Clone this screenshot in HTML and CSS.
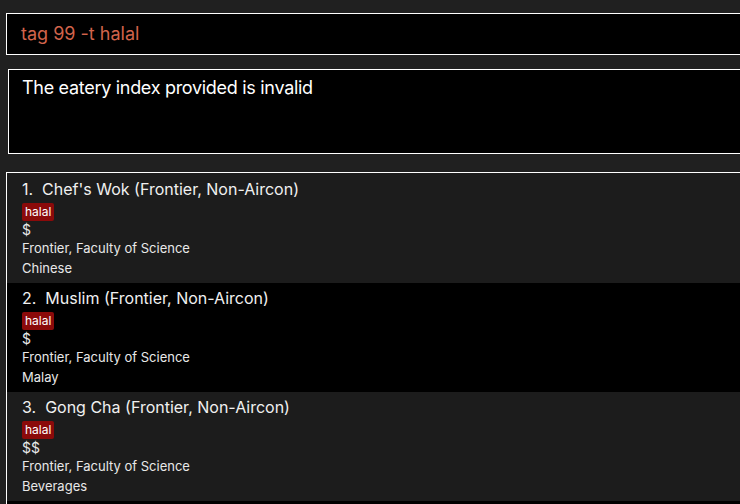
FILE: index.html
```html
<!DOCTYPE html>
<html>
<head>
<meta charset="utf-8">
<link rel="stylesheet" href="styles.css">
</head>
<body>
<div class="app">
  <div class="command">tag 99 -t halal</div>
  <div class="result">The eatery index provided is invalid</div>
  <div class="list">
    <div class="row odd">
      <div class="title">1.&nbsp; Chef's Wok (Frontier, Non-Aircon)</div>
      <div class="tags"><span class="tag">halal</span></div>
      <div class="price">$</div>
      <div class="line">Frontier, Faculty of Science</div>
      <div class="line">Chinese</div>
    </div>
    <div class="row even">
      <div class="title">2.&nbsp; Muslim (Frontier, Non-Aircon)</div>
      <div class="tags"><span class="tag">halal</span></div>
      <div class="price">$</div>
      <div class="line">Frontier, Faculty of Science</div>
      <div class="line">Malay</div>
    </div>
    <div class="row odd">
      <div class="title">3.&nbsp; Gong Cha (Frontier, Non-Aircon)</div>
      <div class="tags"><span class="tag">halal</span></div>
      <div class="price">$$</div>
      <div class="line">Frontier, Faculty of Science</div>
      <div class="line">Beverages</div>
    </div>
    <div class="row even"></div>
  </div>
</div>
</body>
</html>
```
FILE: styles.css
```css
html, body {
  margin: 0;
  padding: 0;
  background: #202020;
  overflow: hidden;
  width: 740px;
  height: 504px;
  font-family: Inter, "Open Sans", sans-serif;
}
.app {
  display: flex;
  flex-direction: column;
}
.command {
  margin: 13px 0 0 6px;
  height: 40px;
  border: 1px solid #fff;
  border-right: none;
  background: #000;
  color: #d2644c;
  font-size: 18px;
  line-height: 40px;
  padding-left: 14px;
}
.result {
  margin: 14px 0 0 8px;
  box-sizing: border-box;
  height: 85px;
  border: 1px solid #fff;
  border-right: none;
  background: #000;
  color: #fff;
  font-size: 18px;
  letter-spacing: -0.3px;
  padding: 7px 13px;
}
.list {
  margin: 18px 0 0 6px;
  border: 1px solid #fff;
  border-right: none;
  border-bottom: none;
  padding-top: 1px;
  background: #1c1c1c;
}
.row {
  height: 109px;
  box-sizing: border-box;
  padding: 5px 15px 0;
  color: #e8e8e8;
}
.row.odd { background: #1c1c1c; }
.row.even { background: #000; }
.title {
  font-size: 16px;
  line-height: 20px;
  color: #f0f0f0;
}
.tags {
  margin-top: 1px;
  height: 20px;
}
.tag {
  display: inline-block;
  background: #8b0a0a;
  color: #fff;
  font-size: 12px;
  line-height: 18px;
  padding: 0 3px;
  border-radius: 2px;
}
.price {
  font-size: 14px;
  line-height: 19px;
}
.line {
  font-size: 13px;
  line-height: 19.5px;
}
```
